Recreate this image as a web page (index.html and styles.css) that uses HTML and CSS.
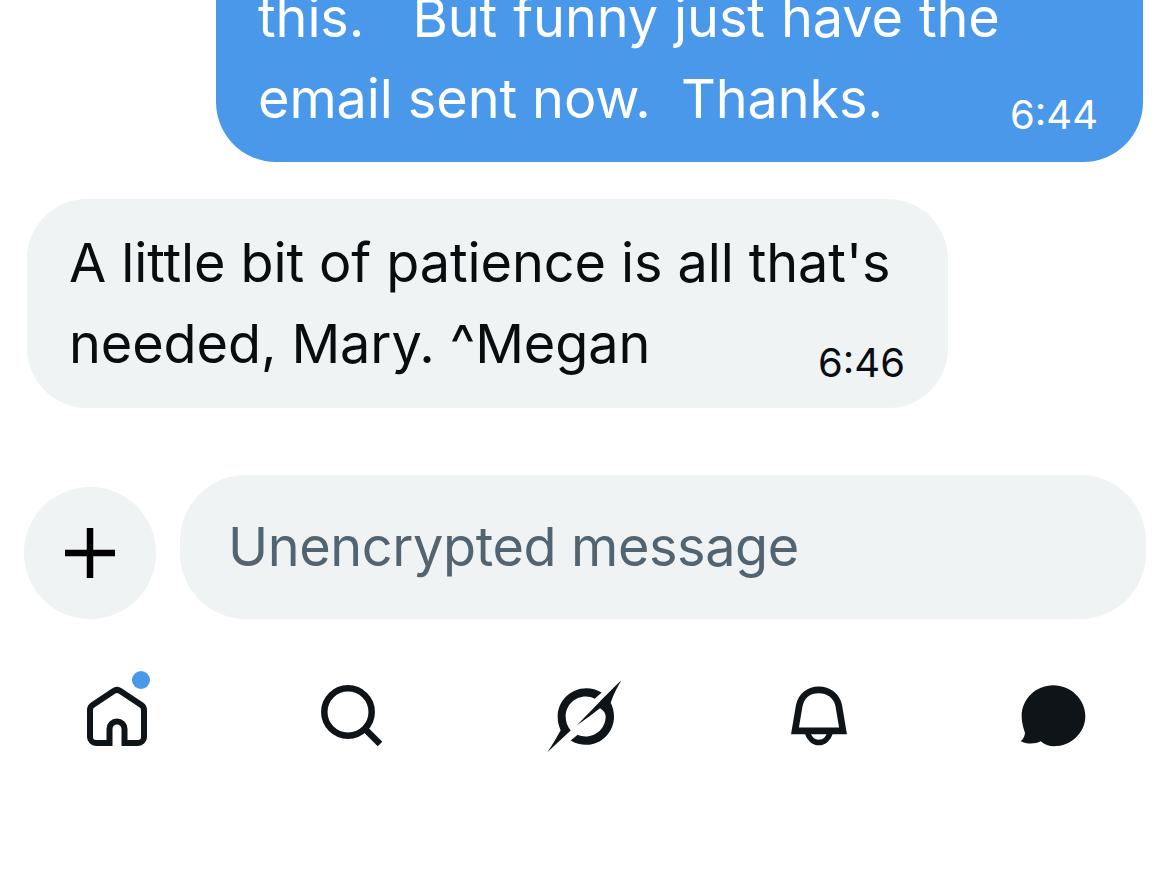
FILE: index.html
```html
<!DOCTYPE html>
<html lang="en">
<head>
    <meta charset="UTF-8">
    <meta name="viewport" content="width=device-width, initial-scale=1.0">
    <title>Messages</title>
    <link rel="stylesheet" href="styles.css">
</head>
<body>
    <div class="screen">
        <div class="thread">
            <div class="bubble sent">
                <div class="line wide-words">this.   But funny just have the</div>
                <div class="last-line">
                    <span class="line">email sent now.  Thanks.</span>
                    <span class="time">6:44</span>
                </div>
            </div>
            <div class="bubble received">
                <div class="line">A little bit of patience is all that's</div>
                <div class="last-line">
                    <span class="line">needed, Mary. ^Megan</span>
                    <span class="time">6:46</span>
                </div>
            </div>
        </div>

        <div class="composer">
            <div class="add-btn">
                <svg class="plus" viewBox="0 0 50 50"><path d="M25 0V50M0 25H50"/></svg>
            </div>
            <div class="message-input">Unencrypted message</div>
        </div>

        <nav class="tabs">
            <div class="tab">
                <span class="home">
                    <svg class="icon-home" viewBox="0 0 60 60"><path d="M22.5 57H9a6 6 0 0 1-6-6V24a6 6 0 0 1 2.7-5L26.7 5a6 6 0 0 1 6.6 0L54.3 19a6 6 0 0 1 2.7 5V51a6 6 0 0 1-6 6H37.5V43a7.5 7.5 0 0 0-15 0Z"/></svg>
                    <span class="dot"></span>
                </span>
            </div>
            <div class="tab">
                <svg class="icon-search" viewBox="0 0 62 62"><circle cx="27" cy="27" r="23.7"/><path d="M44 44L59 59"/></svg>
            </div>
            <div class="tab">
                <svg class="icon-explore" viewBox="70 50 240 230">
                    <path d="M243 93C228 84 213 80 197 80C150 80 111 118 111 165C111 180 114 194 120 206C108 228 94 252 80 272L150 207C140 195 135 181 135 165C135 132 162 105 195 105C205 105 214 107 222 112Z"/>
                    <path d="M302 57C270 85 215 145 168 192C192 175 215 158 238 140C249 146 255 155 255 165C255 198 228 225 195 225C186 225 178 224 171 220L150 237C164 246 180 250 197 250C243 250 280 212 280 165C280 150 276 136 270 124C278 100 290 75 302 57Z"/>
                </svg>
            </div>
            <div class="tab">
                <svg class="icon-bell" viewBox="810 74 175 186">
                    <path d="M825 212L838 135C845 105 868 88 897 88C926 88 950 105 957 135L970 212Z"/>
                    <path class="clapper" d="M862 215C868 236 882 247 897 247C912 247 926 236 932 215"/>
                </svg>
            </div>
            <div class="tab">
                <svg class="icon-chat" viewBox="118 70 198 188"><path d="M218 72C165 72 123 114 123 165C123 185 130 205 133 215C132 225 127 235 120 240C140 250 165 248 180 240C192 250 205 255 220 255C270 255 314 215 314 165C314 114 270 72 218 72Z"/></svg>
            </div>
        </nav>
    </div>
</body>
</html>
```

FILE: styles.css
```css
html, body {
    margin: 0;
    background: #fff;
}

.screen {
    height: 891px;
    overflow: hidden;
    display: flex;
    flex-direction: column;
    justify-content: flex-end;
    font-family: Inter, "Liberation Sans", sans-serif;
    color: #0f1419;
}

/* messages */
.thread {
    display: flex;
    flex-direction: column;
    gap: 37px;
    padding: 0 26px 67px 27px;
}

.bubble {
    box-sizing: border-box;
    padding: 23px 43px 24px 42px;
    border-radius: 60px;
    font-size: 54px;
    letter-spacing: -0.1px;
    line-height: 81px;
}

.line {
    white-space: pre;
}

.wide-words {
    word-spacing: 1px;
}

.last-line {
    display: flex;
    justify-content: space-between;
    align-items: flex-end;
}

.sent {
    align-self: flex-end;
    width: 927px;
    padding: 120px 45px 23px 42px;
    background: #4a98e9;
    color: #fff;
}

.sent .time {
    margin-bottom: 2px;
}

.received {
    align-self: flex-start;
    width: 921px;
    background: #eff3f4;
    color: #0a0d10;
}

.received .time {
    margin-bottom: -1px;
}

.time {
    flex: none;
    font-size: 40px;
    letter-spacing: 0;
    line-height: 44px;
}

/* input row */
.composer {
    display: flex;
    align-items: flex-end;
    gap: 24px;
    padding: 0 23px 0 24px;
}

.add-btn {
    flex: none;
    display: flex;
    align-items: center;
    justify-content: center;
    width: 132px;
    height: 132px;
    border-radius: 50%;
    background: #eff3f4;
}

.plus {
    width: 50px;
    height: 50px;
    fill: none;
    stroke: #000;
    stroke-width: 6.5;
}

.message-input {
    flex: 1;
    height: 144px;
    padding-left: 48px;
    border-radius: 66px;
    background: #eff3f4;
    color: #536471;
    font-size: 54px;
    letter-spacing: -0.4px;
    line-height: 144px;
}

/* bottom tabs */
.tabs {
    display: grid;
    grid-template-columns: repeat(5, 234px);
    padding: 37px 0 115px 0;
}

.tab {
    display: flex;
    align-items: center;
    justify-content: center;
    height: 120px;
}

.tabs svg {
    display: block;
    fill: #0f1419;
}

.home {
    position: relative;
}

.icon-home {
    width: 60px;
    height: 60px;
}

.tabs .icon-home path {
    fill: none;
    stroke: #0f1419;
    stroke-width: 6;
}

.dot {
    position: absolute;
    top: -15px;
    right: -3px;
    width: 18px;
    height: 18px;
    border-radius: 50%;
    background: #4a98e9;
}

.icon-search {
    width: 62px;
    height: 62px;
    margin-left: 2px;
}

.tabs .icon-search circle,
.tabs .icon-search path {
    fill: none;
    stroke: #0f1419;
    stroke-width: 6.5;
}

.icon-explore {
    width: 80px;
    height: 77px;
    margin-left: -2px;
}

.icon-bell {
    width: 58px;
    height: 62px;
}

.tabs .icon-bell path {
    fill: none;
    stroke: #0f1419;
    stroke-width: 20;
}

.tabs .icon-bell .clapper {
    stroke-width: 17;
}

.icon-chat {
    width: 66px;
    height: 64px;
    margin-top: -1px;
}
```
